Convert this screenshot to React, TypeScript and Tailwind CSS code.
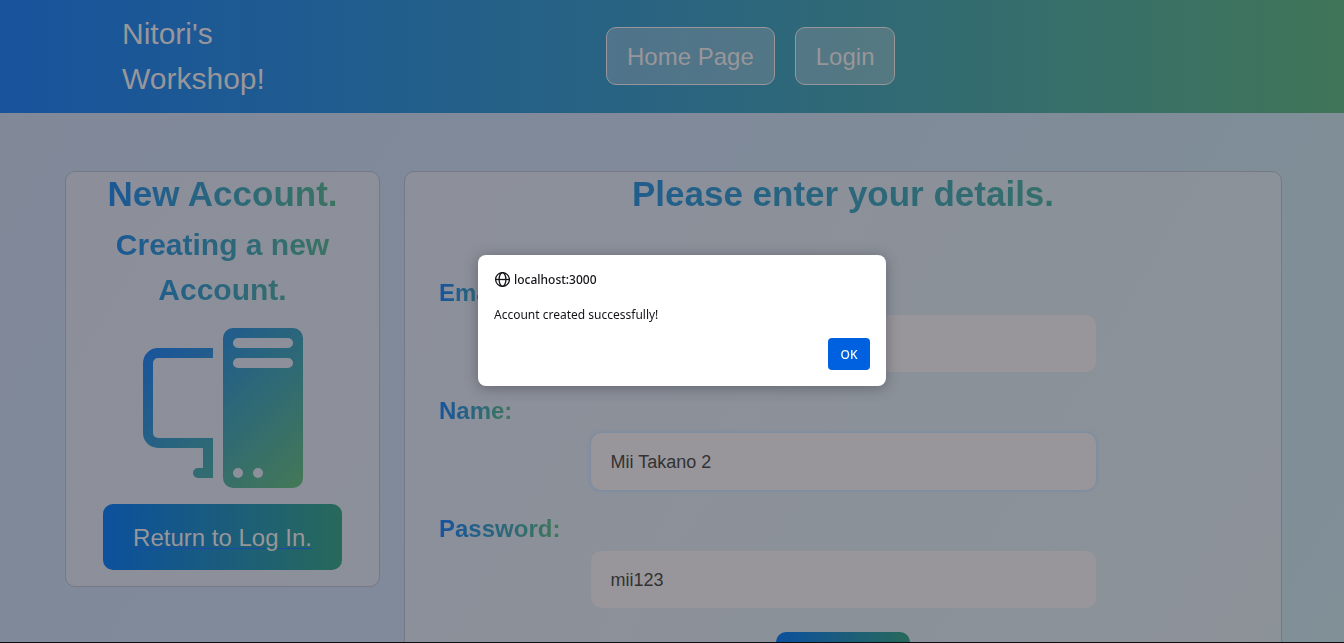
import React from "react";

const headingGradient =
  "bg-linear-to-r from-[#18539c] via-[#2b667c] to-[#407758] bg-clip-text text-transparent font-bold";

const buttonGradient = "bg-linear-to-r from-[#0d509d] via-[#1b5c7c] to-[#28695a]";

function Header() {
  return (
    <header className="flex h-[113px] shrink-0 items-center bg-linear-to-r from-[#18539c] via-[#2a6480] to-[#407558] pb-0.5 pl-[122px]">
      <div className="w-[484px]">
        <a href="#" className="block w-40 text-[30px] leading-[45px] text-[#98969a]">
          Nitori's Workshop!
        </a>
      </div>
      <nav className="flex gap-5">
        {["Home Page", "Login"].map((label) => (
          <a
            key={label}
            href="#"
            className="rounded-[10px] border border-[#98969a] bg-[#98969a]/35 px-5 pt-[11px] pb-[9px] text-2xl leading-9 text-[#98969a]"
          >
            {label}
          </a>
        ))}
      </nav>
    </header>
  );
}

function ComputerIcon() {
  return (
    <svg viewBox="0 0 16 16" className="size-40" aria-hidden="true">
      <defs>
        <linearGradient id="pc" x1="0" y1="0" x2="16" y2="16" gradientUnits="userSpaceOnUse">
          <stop offset="0" stopColor="#18539c" />
          <stop offset="0.1" stopColor="#1a559a" />
          <stop offset="0.6" stopColor="#2f6a74" />
          <stop offset="1" stopColor="#447856" />
        </linearGradient>
      </defs>
      <path
        fill="url(#pc)"
        d="M8 1a1 1 0 0 1 1-1h6a1 1 0 0 1 1 1v14a1 1 0 0 1-1 1H9a1 1 0 0 1-1-1zm1 13.5a.5.5 0 1 0 1 0 .5.5 0 0 0-1 0m2 0a.5.5 0 1 0 1 0 .5.5 0 0 0-1 0M9.5 1a.5.5 0 0 0 0 1h5a.5.5 0 0 0 0-1zM9 3.5a.5.5 0 0 0 .5.5h5a.5.5 0 0 0 0-1h-5a.5.5 0 0 0-.5.5M1.5 2A1.5 1.5 0 0 0 0 3.5v7A1.5 1.5 0 0 0 1.5 12H6v2h-.5a.5.5 0 0 0 0 1H7v-4H1.5a.5.5 0 0 1-.5-.5v-7a.5.5 0 0 1 .5-.5H7V2z"
      />
    </svg>
  );
}

function Field({ id, label, value, active }: { id: string; label: string; value: string; active?: boolean }) {
  return (
    <div className="flex flex-col gap-1">
      <label htmlFor={id} className={`self-start text-2xl leading-9 ${headingGradient}`}>
        {label}
      </label>
      <input
        id={id}
        type="text"
        defaultValue={value}
        className={`h-[57px] w-5/8 self-center rounded-[10px] bg-[#98969a] px-5 pt-0.5 text-lg text-[#323234] outline-none ${
          active ? "shadow-[0_0_3px_1px_#788ca4]" : ""
        }`}
      />
    </div>
  );
}

function AlertDialog() {
  return (
    <div className="fixed inset-0 flex items-start justify-center pt-[255px] pl-5">
      <div
        role="alertdialog"
        aria-labelledby="alert-title"
        aria-describedby="alert-text"
        className="flex h-[131px] w-[408px] flex-col rounded-lg bg-white p-4 font-['Noto_Sans',sans-serif] text-xs text-[#15141a] shadow-[0_2px_14px_rgba(40,40,50,0.4)]"
      >
        <h2 id="alert-title" className="flex items-center gap-1 leading-[18px] font-medium">
          <svg viewBox="0 0 16 16" className="size-4" fill="none" stroke="currentColor" strokeWidth="1.3" aria-hidden="true">
            <circle cx="8.5" cy="7.5" r="6.9" />
            <ellipse cx="8.5" cy="7.5" rx="3.4" ry="6.9" />
            <path d="M1.5 7.5h14" />
          </svg>
          localhost:3000
        </h2>
        <p id="alert-text" className="mt-[18px] leading-4">
          Account created successfully!
        </p>
        <button
          type="button"
          className="mt-auto h-8 w-[42px] self-end rounded bg-[#0061e0] pt-0.5 font-medium text-[#fbfbfe]"
        >
          OK
        </button>
      </div>
    </div>
  );
}

export default function App() {
  return (
    <div className="flex h-screen flex-col overflow-hidden border-b border-[#0c0c12] bg-[linear-gradient(120deg,#818999_0%,#808a9a_45%,#7f8d98_75%,#819097_100%)] font-['Liberation_Sans',Arial,sans-serif]">
      <Header />
      <main className="mt-[58px] flex min-h-0 flex-1 items-start gap-6 pr-[62px] pl-[65px]">
        <section className="flex w-[315px] shrink-0 flex-col items-center rounded-[10px] border border-[#747985] bg-[#98969a]/50 px-3 pb-4">
          <h1 className={`w-full text-center text-[35px] leading-[44px] ${headingGradient}`}>New Account.</h1>
          <h2 className={`mt-1.5 w-full px-6 text-center text-[30px] leading-[45px] ${headingGradient}`}>
            Creating a new Account.
          </h2>
          <div className="mt-4">
            <ComputerIcon />
          </div>
          <a
            href="#"
            className={`mt-4 rounded-[10px] px-[30px] pt-4 pb-3.5 text-2xl leading-9 text-[#98969a] underline decoration-[#1a4ba2] decoration-1 underline-offset-2 ${buttonGradient}`}
          >
            Return to Log In.
          </a>
        </section>
        <section className="min-w-0 flex-1 rounded-[10px] border border-[#747985] bg-[#98969a]/50 px-[34px] pb-6">
          <h1 className={`text-center text-[35px] leading-[44px] ${headingGradient}`}>
            Please enter your details.
          </h1>
          <form className="mt-[59px] flex flex-col gap-[21px]">
            <Field id="email" label="Email:" value="" />
            <Field id="name" label="Name:" value="Mii Takano 2" active />
            <Field id="password" label="Password:" value="mii123" />
            <button
              type="button"
              className={`mt-[3px] self-center rounded-[10px] px-[30px] pt-4 pb-3.5 text-2xl leading-9 text-[#98969a] ${buttonGradient}`}
            >
              Submit
            </button>
          </form>
        </section>
      </main>
      <AlertDialog />
    </div>
  );
}
